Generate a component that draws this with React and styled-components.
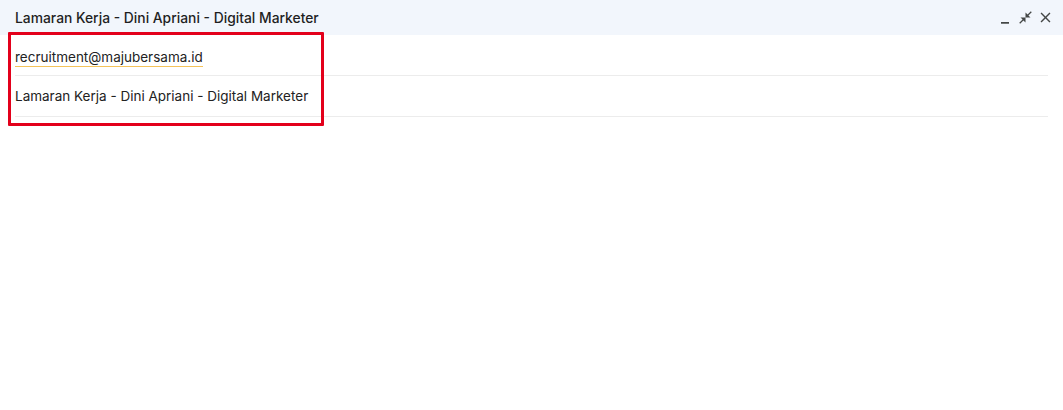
import React from 'react'
import styled, { createGlobalStyle } from 'styled-components'

const GlobalStyle = createGlobalStyle`
  html, body {
    margin: 0;
    padding: 0;
    background: #ffffff;
  }
  body {
    font-family: Inter, Roboto, "Noto Sans", Arial, sans-serif;
    color: #1f1f1f;
  }
`

const Compose = styled.div`
  position: relative;
  width: 1063px;
  height: 410px;
  background: #fff;
`

const Header = styled.div`
  height: 35px;
  background: #f2f6fc;
  display: flex;
  align-items: center;
  justify-content: space-between;
  padding: 0 8px 0 15px;
  box-sizing: border-box;
`

const Title = styled.div`
  font-size: 13.85px;
  font-weight: 500;
  color: #1f1f1f;
`

const Actions = styled.div`
  display: flex;
  align-items: center;
`

const IconBtn = styled.button`
  width: 20px;
  height: 20px;
  border: 0;
  padding: 0;
  background: none;
  display: flex;
  align-items: center;
  justify-content: center;
  color: #444746;
  svg {
    width: ${(p) => p.size || 14}px;
    height: ${(p) => p.size || 14}px;
    fill: currentColor;
  }
`

const Fields = styled.div`
  padding: 0 15px;
`

const Row = styled.div`
  height: 40px;
  display: flex;
  align-items: center;
  border-bottom: 1px solid #ececec;
  font-size: 13.5px;
  color: #222;
`

const Recipient = styled.span`
  border-bottom: 1px solid #f4c35a;
  padding-bottom: 1px;
  margin-top: 5px;
`

const Highlight = styled.div`
  position: absolute;
  left: 8px;
  top: 32px;
  width: 316px;
  height: 94px;
  box-sizing: border-box;
  border: 3px solid #e3001b;
  border-radius: 1px;
  pointer-events: none;
`

export default function App() {
  return (
    <>
      <GlobalStyle />
      <Compose>
        <Header>
          <Title>Lamaran Kerja - Dini Apriani - Digital Marketer</Title>
          <Actions>
            <IconBtn size={16}>
              <svg viewBox="0 0 24 24">
                <path d="M6 18h12v2.6H6z" />
              </svg>
            </IconBtn>
            <IconBtn size={15}>
              <svg viewBox="0 0 24 24">
                <path d="M22 3.41L16.71 8.7 20 12h-8V4l3.29 3.29L20.59 2 22 3.41zM3.41 22l5.29-5.29L12 20v-8H4l3.29 3.29L2 20.59 3.41 22z" />
              </svg>
            </IconBtn>
            <IconBtn size={17}>
              <svg viewBox="0 0 24 24">
                <path d="M19 6.41L17.59 5 12 10.59 6.41 5 5 6.41 10.59 12 5 17.59 6.41 19 12 13.41 17.59 19 19 17.59 13.41 12z" />
              </svg>
            </IconBtn>
          </Actions>
        </Header>
        <Fields>
          <Row>
            <Recipient>recruitment@majubersama.id</Recipient>
          </Row>
          <Row>Lamaran Kerja - Dini Apriani - Digital Marketer</Row>
        </Fields>
        <Highlight />
      </Compose>
    </>
  )
}
